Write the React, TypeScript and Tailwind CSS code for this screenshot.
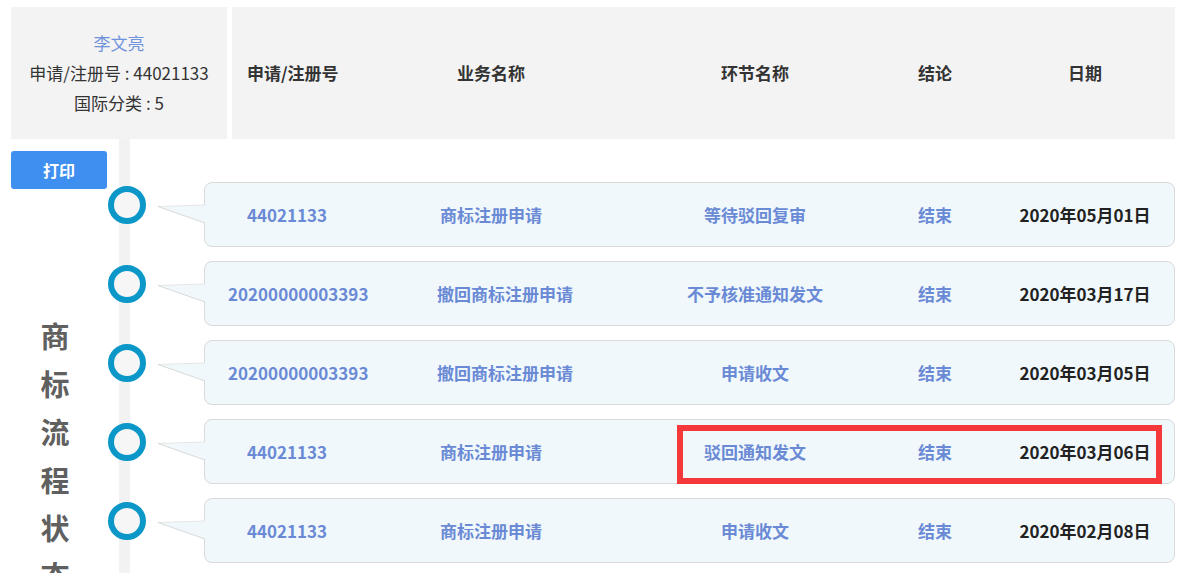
const rows = [
  { no: "44021133", biz: "商标注册申请", step: "等待驳回复审", result: "结束", date: "2020年05月01日" },
  { no: "20200000003393", biz: "撤回商标注册申请", step: "不予核准通知发文", result: "结束", date: "2020年03月17日" },
  { no: "20200000003393", biz: "撤回商标注册申请", step: "申请收文", result: "结束", date: "2020年03月05日" },
  { no: "44021133", biz: "商标注册申请", step: "驳回通知发文", result: "结束", date: "2020年03月06日", marked: true },
  { no: "44021133", biz: "商标注册申请", step: "申请收文", result: "结束", date: "2020年02月08日" },
];

function Tail() {
  return (
    <svg width="59" height="65" viewBox="0 0 59 65" className="relative z-10 -mr-px shrink-0">
      <polygon points="12,24.5 59,23 59,41" fill="#f0f8fc" />
      <line x1="12" y1="24.5" x2="59" y2="23" stroke="#e6e6e6" strokeWidth="1" />
      <line x1="12" y1="24.5" x2="59" y2="41" stroke="#d8d8d8" strokeWidth="1" />
    </svg>
  );
}

export default function App() {
  return (
    <div className="w-[1181px] h-[573px] overflow-hidden bg-white font-['Microsoft_YaHei','Noto_Sans_CJK_SC',sans-serif] text-[#333]">
      {/* top */}
      <div className="flex gap-[5px] pt-[7px] pl-[11px] pr-[6px]">
        <div className="w-[216px] h-[132px] bg-[#f3f3f3] flex flex-col items-center justify-center text-[17px] leading-[30px]">
          <div className="text-[#6f92dc]">李文亮</div>
          <div>申请/注册号 : 44021133</div>
          <div>国际分类 : 5</div>
        </div>
        <div className="flex-1 h-[132px] bg-[#f3f3f3] flex items-center text-[17px] font-bold whitespace-nowrap">
          <div className="w-[195px] pl-[15px]">申请/注册号</div>
          <div className="w-[128px] text-center">业务名称</div>
          <div className="w-[200px] ml-[100px] text-center">环节名称</div>
          <div className="w-[60px] ml-[50px] text-center">结论</div>
          <div className="w-[160px] ml-[40px] text-center">日期</div>
        </div>
      </div>

      {/* body */}
      <div className="flex pl-[11px] pr-[6px]">
        <div className="w-[97px] shrink-0">
          <button className="mt-[12px] w-[96px] h-[38px] rounded-[3px] bg-[#3f8ff0] text-white text-[16px] font-bold">
            打印
          </button>
          <div className="mt-[122px] w-[88px] flex flex-col items-center text-[29px] leading-[48px] font-bold text-[#606060]">
            {"商标流程状态".split("").map((c) => (
              <span key={c}>{c}</span>
            ))}
          </div>
        </div>

        <div className="relative flex-1 pt-[43px] flex flex-col gap-[14px]">
          <div className="absolute left-[11px] top-0 w-[11px] h-[600px] bg-[#f2f2f2]" />
          {rows.map((r, i) => (
            <div key={i} className="relative flex items-start">
              <div className="w-[38px] shrink-0 pt-[4px]">
                <div className="w-[38px] h-[38px] rounded-full border-[6px] border-[#0b98c9] bg-[#f6f6f6]" />
              </div>
              <Tail />
              <div className="relative flex-1 h-[65px] rounded-[8px] border border-[#dadada] bg-[#f0f8fc] flex items-center text-[17px] font-bold whitespace-nowrap">
                <div className="w-[118px] ml-[23px] text-center text-[#6a8ad5]">{r.no}</div>
                <div className="w-[108px] ml-[91px] text-center text-[#6a8ad5]">{r.biz}</div>
                <div className="w-[200px] ml-[110px] text-center text-[#6a8ad5]">{r.step}</div>
                <div className="w-[60px] ml-[50px] text-center text-[#6a8ad5]">{r.result}</div>
                <div className="w-[160px] ml-[40px] text-center text-[#222]">{r.date}</div>
                {r.marked && (
                  <div className="absolute left-[472px] top-[5px] w-[485px] h-[59px] border-[6px] border-[#f5393b]" />
                )}
              </div>
            </div>
          ))}
        </div>
      </div>
    </div>
  );
}
